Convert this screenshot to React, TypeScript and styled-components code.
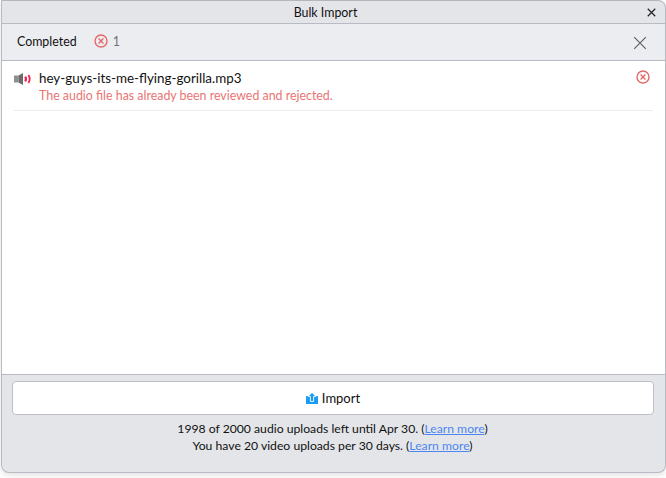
import React from "react";
import styled, { createGlobalStyle } from "styled-components";

const GlobalStyle = createGlobalStyle`
  html, body {
    margin: 0;
    padding: 0;
    background: #fff;
    font-family: Lato, "Noto Sans", sans-serif;
  }
`;

const Page = styled.div`
  width: 666px;
  height: 478px;
  overflow: hidden;
`;

const Window = styled.div`
  box-sizing: border-box;
  width: 665px;
  height: 473px;
  margin-left: 1px;
  border: 1px solid #b9bbc4;
  border-top-color: #b4b6be;
  border-radius: 0 8px 8px 8px;
  background: #e4e5e9;
  box-shadow: 0 2px 6px rgba(0, 0, 0, 0.12);
  display: flex;
  flex-direction: column;
  overflow: hidden;
`;

const TitleBar = styled.div`
  position: relative;
  flex: 0 0 23px;
  box-sizing: border-box;
  display: flex;
  align-items: center;
  justify-content: center;
  padding-right: 16px;
  font-size: 12.4px;
  color: #111;
  border-bottom: 1px solid #b9bbc4;
`;

const IconButton = styled.span<{ $right: number; $top: number }>`
  position: absolute;
  right: ${(p) => p.$right}px;
  top: ${(p) => p.$top}px;
  display: flex;
`;

const SubHeader = styled.div`
  position: relative;
  flex: 0 0 37px;
  display: flex;
  align-items: center;
  padding: 0 0 2px 15px;
  box-sizing: border-box;
  background: #ecedf0;
  border-bottom: 1px solid #b9bbc4;
  font-size: 12.4px;
  color: #111;
`;

const Status = styled.span`
  display: flex;
  align-items: center;
  gap: 5px;
  margin-left: 17px;
  color: #6d7180;
`;

const List = styled.div`
  flex: 1;
  background: #fff;
  padding: 0 12px;
`;

const Row = styled.div`
  position: relative;
  display: flex;
  height: 50px;
  box-sizing: border-box;
  padding: 8px 0 0 0;
  gap: 8px;
  border-bottom: 1px solid #ececef;
`;

const RowText = styled.div`
  display: flex;
  flex-direction: column;
`;

const FileName = styled.div`
  font-size: 13.4px;
  line-height: 18px;
  color: #111;
`;

const ErrorText = styled.div`
  font-size: 12.4px;
  line-height: 17px;
  color: #ea7474;
`;

const Footer = styled.div`
  flex: 0 0 98px;
  box-sizing: border-box;
  border-top: 1px solid #b9bbc4;
  padding: 6px 11px 0 10px;
  display: flex;
  flex-direction: column;
  align-items: stretch;
`;

const ImportButton = styled.button`
  height: 34px;
  border: 1px solid #bdbfc8;
  border-radius: 4px;
  background: #fff;
  display: flex;
  align-items: center;
  justify-content: center;
  gap: 4px;
  font: inherit;
  font-size: 13px;
  color: #111;
  padding: 0;
`;

const Quota = styled.div`
  margin-top: 5px;
  padding-right: 1px;
  text-align: center;
  font-size: 12.2px;
  line-height: 17px;
  color: #111;
`;

const Learn = styled.a`
  color: #4d86f0;
  text-decoration: underline;
`;

function ErrorIcon() {
  return (
    <svg width="14" height="14" viewBox="0 0 14 14" fill="none" stroke="#e46a6a" strokeWidth="1.4">
      <circle cx="7" cy="7" r="6" />
      <path d="M4.6 4.6l4.8 4.8M9.4 4.6l-4.8 4.8" />
    </svg>
  );
}

function CloseIcon({ size, color, weight }: { size: number; color: string; weight: number }) {
  return (
    <svg width={size} height={size} viewBox="0 0 12 12" fill="none" stroke={color} strokeWidth={weight}>
      <path d="M1 1l10 10M11 1L1 11" />
    </svg>
  );
}

function AudioIcon() {
  return (
    <svg width="17" height="12" viewBox="0 0 17 12" style={{ marginTop: 4 }}>
      <rect x="0" y="2.5" width="4.5" height="7" fill="#8f8f8f" />
      <path d="M4.5 2.5L9 0v12L4.5 9.5z" fill="#6b6b6b" />
      <path d="M11.2 3.6c1 1.5 1 3.3 0 4.8" fill="none" stroke="#f0204f" strokeWidth="2.2" />
      <path d="M14.4 2c1.6 2.5 1.6 5.5 0 8" fill="none" stroke="#f0204f" strokeWidth="1.8" />
    </svg>
  );
}

function ImportIcon() {
  return (
    <svg width="12" height="12" viewBox="0 0 12 12">
      <rect x="0" y="4" width="12" height="8" rx="0.5" fill="#1a9cf0" />
      <path d="M6 .4L10 4.4H7.6V9.4H4.4V4.4H2z" fill="#1a9cf0" stroke="#fff" strokeWidth="0.9" />
    </svg>
  );
}

export default function App() {
  return (
    <Page>
      <GlobalStyle />
      <Window>
        <TitleBar>
          Bulk Import
          <IconButton $right={9} $top={7}>
            <CloseIcon size={9} color="#222" weight={1.6} />
          </IconButton>
        </TitleBar>
        <SubHeader>
          Completed
          <Status>
            <ErrorIcon />1
          </Status>
          <IconButton $right={18} $top={12}>
            <CloseIcon size={14} color="#666" weight={1.1} />
          </IconButton>
        </SubHeader>
        <List>
          <Row>
            <AudioIcon />
            <RowText>
              <FileName>hey-guys-its-me-flying-gorilla.mp3</FileName>
              <ErrorText>The audio file has already been reviewed and rejected.</ErrorText>
            </RowText>
            <IconButton $right={3} $top={9}>
              <ErrorIcon />
            </IconButton>
          </Row>
        </List>
        <Footer>
          <ImportButton>
            <ImportIcon />
            Import
          </ImportButton>
          <Quota>
            1998 of 2000 audio uploads left until Apr 30. (<Learn>Learn more</Learn>)
            <br />
            You have 20 video uploads per 30 days. (<Learn>Learn more</Learn>)
          </Quota>
        </Footer>
      </Window>
    </Page>
  );
}
